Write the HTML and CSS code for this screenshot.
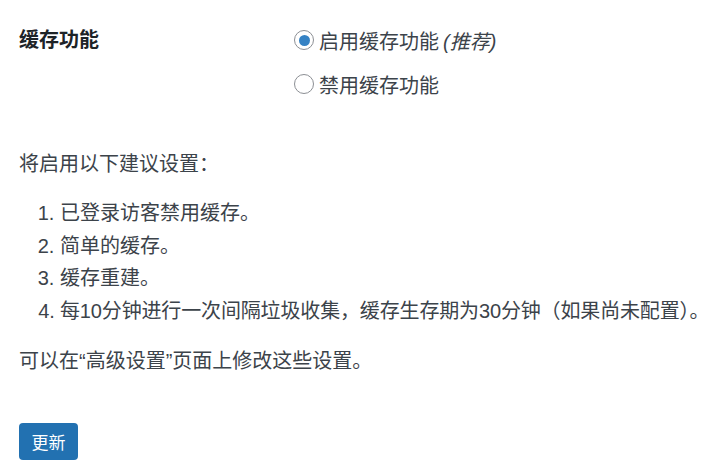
FILE: index.html
```html
<!DOCTYPE html>
<html>
<head>
    <title>缓存设置</title>
    <link rel="stylesheet" href="styles.css">
</head>
<body>
    <div class="form-row">
        <div class="form-label">缓存功能</div>
        <div class="form-options">
            <label class="radio-line"><input type="radio" name="caching" checked> 启用缓存功能 <em>(推荐)</em></label>
            <label class="radio-line"><input type="radio" name="caching"> 禁用缓存功能</label>
        </div>
    </div>

    <p class="intro">将启用以下建议设置：</p>
    <ol class="settings-list">
        <li>已登录访客禁用缓存。</li>
        <li>简单的缓存。</li>
        <li>缓存重建。</li>
        <li class="long-item">每10分钟进行一次间隔垃圾收集，缓存生存期为30分钟（如果尚未配置）。</li>
    </ol>
    <p class="note">可以在“高级设置”页面上修改这些设置。</p>

    <button class="btn-primary">更新</button>
</body>
</html>
```

FILE: styles.css
```css
html, body { overflow: hidden; }
body { margin: 0; padding: 18px 0 0 19px; font-family: "Liberation Sans", "Noto Sans CJK SC", sans-serif; font-size: 20px; color: #3c434a; background: #fff; }
.form-row { display: grid; grid-template-columns: 275px 1fr; }
.form-label { font-weight: bold; color: #1d2327; line-height: 44px; }
.form-options { display: flex; flex-direction: column; }
.radio-line { display: flex; align-items: center; height: 44px; white-space: nowrap; }
.radio-line input { appearance: none; -webkit-appearance: none; box-sizing: border-box; width: 20px; height: 20px; margin: 0 5px 0 0; border: 1px solid #8c8f94; border-radius: 50%; background: #fff; display: grid; place-items: center; }
.radio-line input:checked::before { content: ""; width: 11px; height: 11px; border-radius: 50%; background: #3582c4; }
.radio-line em { margin-left: 4px; }
.intro { margin: 42px 0 0; line-height: 32px; }
.settings-list { margin: 17px 0 0; padding-left: 41px; line-height: 32.7px; white-space: nowrap; }
.long-item { letter-spacing: -0.15px; }
.note { margin: 17px 0 0; line-height: 32px; }
.btn-primary { margin-top: 46px; width: 59px; height: 37px; padding: 0; border: none; border-radius: 4px; background: #2271b1; color: #fff; font-family: inherit; font-size: 17px; }
```
